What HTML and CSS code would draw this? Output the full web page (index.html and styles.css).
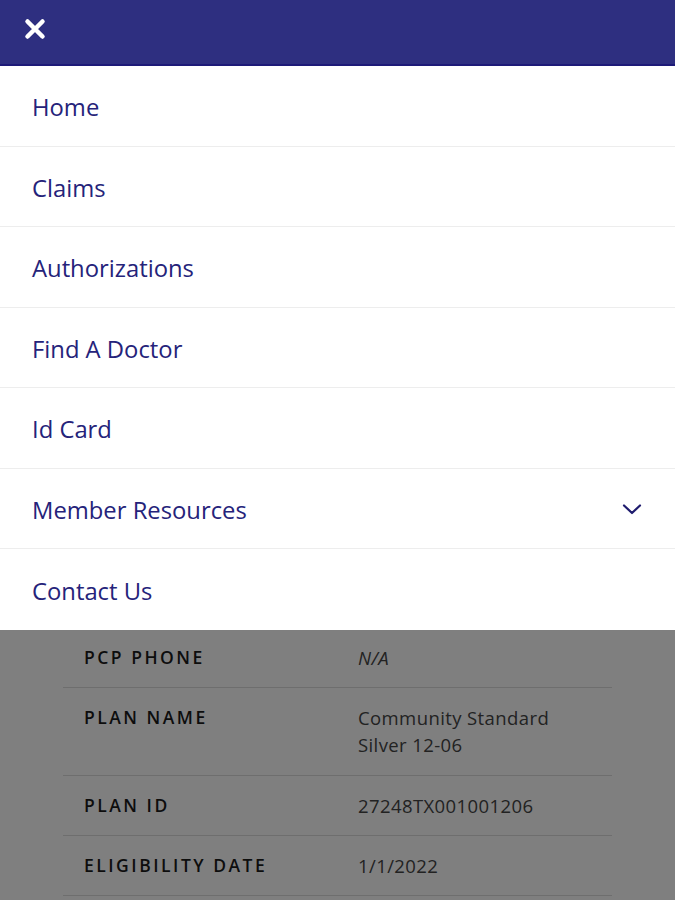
FILE: index.html
```html
<!DOCTYPE html>
<html>
<head>
	<title>Member Menu</title>
	<meta name="viewport" content="width=device-width, initial-scale=1">
	<link rel="stylesheet" href="styles.css">
</head>
<body>

	<div class="page">
		<div class="details">
			<div class="detail-row">
				<div class="detail-label">PCP PHONE</div>
				<div class="detail-value empty">N/A</div>
			</div>
			<div class="detail-row">
				<div class="detail-label">PLAN NAME</div>
				<div class="detail-value">Community Standard<br>Silver 12-06</div>
			</div>
			<div class="detail-row">
				<div class="detail-label">PLAN ID</div>
				<div class="detail-value">27248TX001001206</div>
			</div>
			<div class="detail-row">
				<div class="detail-label">ELIGIBILITY DATE</div>
				<div class="detail-value">1/1/2022</div>
			</div>
		</div>
	</div>

	<div class="overlay"></div>

	<nav class="drawer">
		<div class="drawer-header">
			<svg class="close-icon" width="24" height="24" viewBox="0 0 24 24">
				<path d="M4.5 4.5 L19.5 19.5 M19.5 4.5 L4.5 19.5" stroke="#fff" stroke-width="4.5" stroke-linecap="round" fill="none"/>
			</svg>
		</div>
		<ul class="menu">
			<li class="menu-item">Home</li>
			<li class="menu-item">Claims</li>
			<li class="menu-item">Authorizations</li>
			<li class="menu-item">Find A Doctor</li>
			<li class="menu-item">Id Card</li>
			<li class="menu-item">Member Resources
				<svg class="chevron" width="20" height="11" viewBox="0 0 20 11">
					<path d="M2 1.5 L10 9 L18 1.5" stroke="#1f1c6e" stroke-width="2.2" stroke-linecap="round" stroke-linejoin="round" fill="none"/>
				</svg>
			</li>
			<li class="menu-item">Contact Us</li>
		</ul>
	</nav>

</body>
</html>
```

FILE: styles.css
```css
body,html{
	margin:0;
	background: #fff;
	font-family: "Open Sans", "Liberation Sans", sans-serif;
}

/* page under the drawer */
.page{
	padding-top: 628px;
}

.details{
	margin: 0 63px;
}

.detail-row{
	display: grid;
	grid-template-columns: 295px 1fr;
	padding: 16px 0;
	border-bottom: 1px solid #dcdcdc;
	font-size: 18.5px;
	line-height: 27px;
}

.detail-row:nth-child(2){
	padding-bottom: 17px;
}

.detail-label{
	padding-left: 21px;
	font-size: 17.5px;
	font-weight: 600;
	letter-spacing: 2.5px;
	color: #1a1a1a;
}

.detail-value{
	letter-spacing: 0.4px;
	color: #454545;
}

.detail-value.empty{
	font-style: italic;
}

.overlay{
	position: fixed;
	top: 0;
	left: 0;
	right: 0;
	bottom: 0;
	background: rgba(0,0,0,0.5);
}

/* slide-out menu */
.drawer{
	position: absolute;
	top: 0;
	left: 0;
	right: 0;
	background: #fff;
}

.drawer-header{
	height: 66px;
	background: #2e2f80;
	border-bottom: 2px solid #1d1a78;
	padding: 17px 0 0 23px;
	box-sizing: border-box;
}

.close-icon{
	display: block;
}

.menu{
	list-style: none;
	margin: 0;
	padding: 0;
}

.menu-item{
	display: flex;
	align-items: center;
	justify-content: space-between;
	box-sizing: border-box;
	height: 80.5px;
	padding: 3px 33px 0 32px;
	border-bottom: 1px solid #ededed;
	font-size: 23.8px;
	color: #25237a;
}

.menu-item:last-child{
	border-bottom: none;
}
```
